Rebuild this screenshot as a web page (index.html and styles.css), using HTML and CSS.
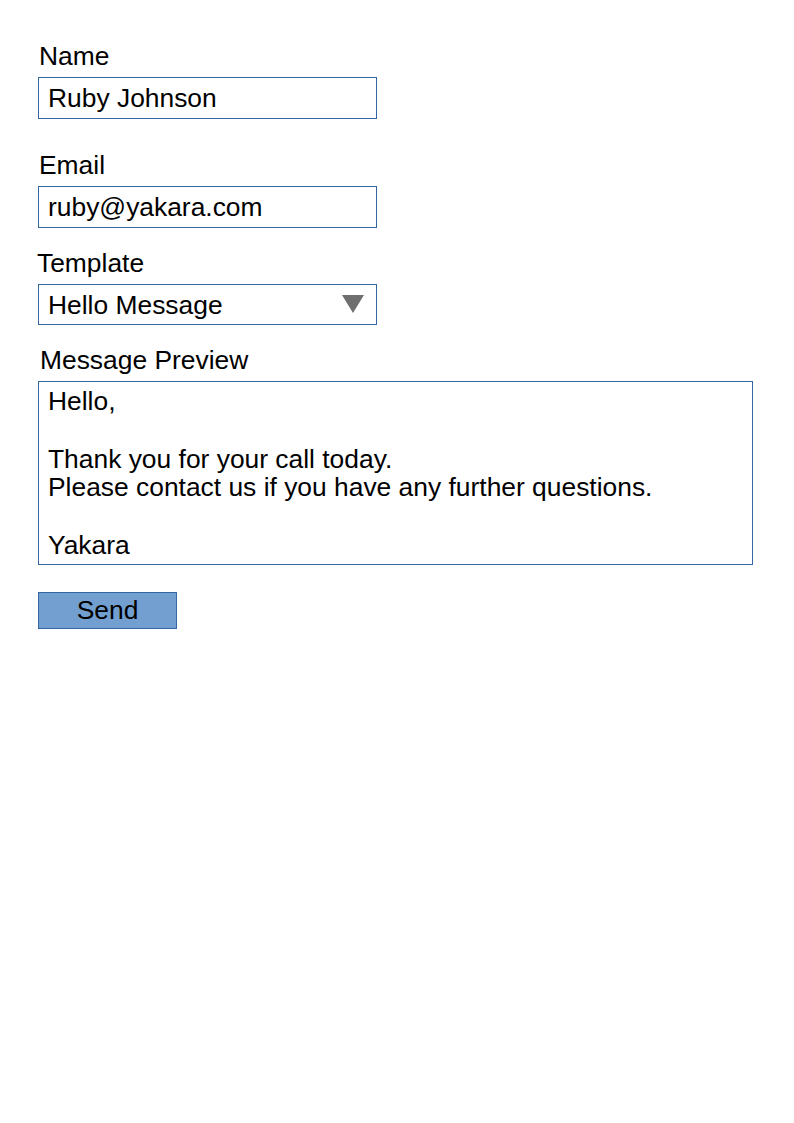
FILE: index.html
```html
<!DOCTYPE html>
<html lang="en">
<head>
<meta charset="utf-8">
<title>Send Message</title>
<link rel="stylesheet" href="styles.css">
</head>
<body>
<form class="form">
  <div class="label label-name">Name</div>
  <div class="field field-short">Ruby Johnson</div>

  <div class="label label-email">Email</div>
  <div class="field field-short">ruby@yakara.com</div>

  <div class="label label-template">Template</div>
  <div class="field field-short field-select">
    <span>Hello Message</span>
    <svg class="caret" width="22" height="18" viewBox="0 0 22 18"><polygon points="0,0 22,0 11,18" fill="#6f6f6f"/></svg>
  </div>

  <div class="label label-message">Message Preview</div>
  <div class="preview"><div>Hello,</div><div>&nbsp;</div><div>Thank you for your call today.</div><div>Please contact us if you have any further questions.</div><div>&nbsp;</div><div>Yakara</div></div>

  <div class="send">Send</div>
</form>
</body>
</html>
```

FILE: styles.css
```css
html, body {
  margin: 0;
  padding: 0;
  background: #ffffff;
}

body {
  font-family: "Liberation Sans", Arial, sans-serif;
  font-size: 26.4px;
  color: #000000;
}

.form {
  display: flex;
  flex-direction: column;
  align-items: flex-start;
  padding: 42px 0 0 38px;
}

.label {
  height: 28px;
  line-height: 28px;
  margin-bottom: 7px;
}

.label-name { padding-left: 1px; }
.label-email { margin-top: 32px; padding-left: 1px; }
.label-template { margin-top: 21px; margin-left: -1px; }
.label-message { margin-top: 21px; padding-left: 2px; }

.field {
  box-sizing: border-box;
  border: 1px solid #3465a4;
  line-height: 28px;
  padding: 6px 8px 5px 9px;
  white-space: nowrap;
}

.field-short {
  width: 339px;
  height: 42px;
}

.field-select {
  height: 41px;
  display: flex;
  align-items: flex-start;
  justify-content: space-between;
  padding-right: 12px;
}

.caret {
  margin-top: 4px;
}

.preview {
  box-sizing: border-box;
  width: 715px;
  height: 184px;
  border: 1px solid #3465a4;
  padding: 5px 8px 5px 9px;
  line-height: 28.8px;
}

.send {
  box-sizing: border-box;
  margin-top: 27px;
  width: 139px;
  height: 37px;
  background: #729fcf;
  border: 1px solid #3465a4;
  line-height: 34px;
  text-align: center;
}
```
